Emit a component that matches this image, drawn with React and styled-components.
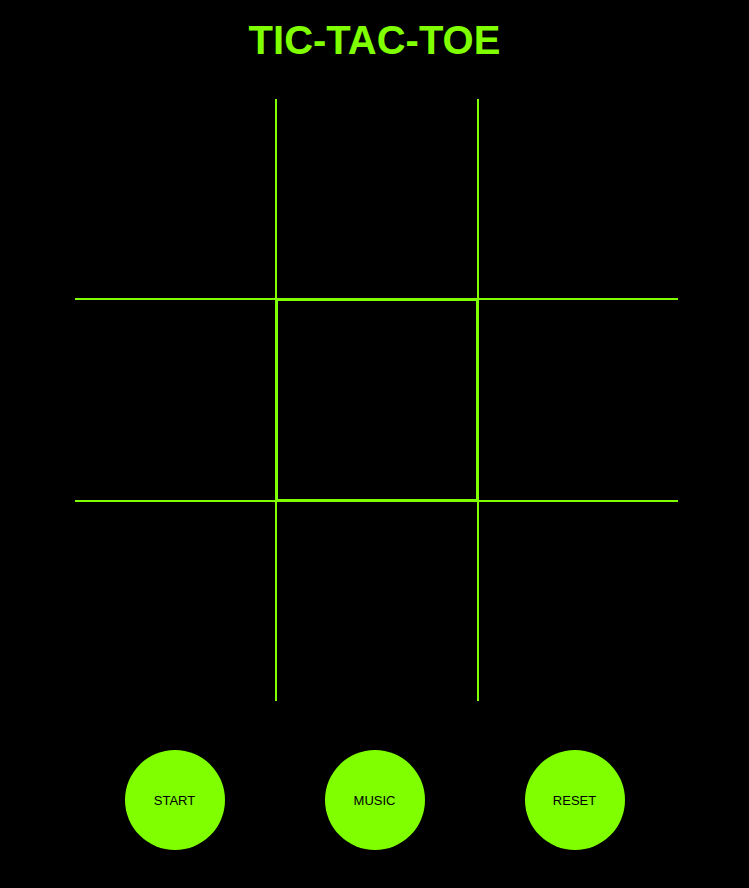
import React from "react";
import styled, { createGlobalStyle, css } from "styled-components";

const GREEN = "#7fff00";

const Global = createGlobalStyle`
  html, body {
    margin: 0;
    padding: 0;
    background: #000;
  }
  body {
    font-family: "Liberation Sans", Arial, sans-serif;
  }
`;

const Page = styled.div`
  display: flex;
  flex-direction: column;
  align-items: center;
  min-height: 888px;
  background: #000;
  padding-top: 17px;
  box-sizing: border-box;
`;

const Title = styled.h1`
  margin: 0;
  font-family: "Liberation Sans", Arial, sans-serif;
  font-weight: 700;
  font-size: 40px;
  line-height: 46px;
  color: ${GREEN};
`;

const Board = styled.div`
  margin-top: 36px;
  margin-left: 4px;
  display: grid;
  grid-template-columns: 201px 202px 200px;
  grid-template-rows: 200px 202px 200px;
`;

const Cell = styled.div`
  box-sizing: border-box;
  border: 0 solid ${GREEN};
  ${({ $col }) => $col === 0 && css`border-right-width: 1px;`}
  ${({ $col }) => $col === 1 && css`border-left-width: 1px; border-right-width: 1px;`}
  ${({ $col }) => $col === 2 && css`border-left-width: 1px;`}
  ${({ $row }) => $row === 0 && css`border-bottom-width: 1px;`}
  ${({ $row }) => $row === 1 && css`border-top-width: 1px; border-bottom-width: 1px;`}
  ${({ $row }) => $row === 2 && css`border-top-width: 1px;`}
  ${({ $active }) => $active && css`box-shadow: inset 0 0 0 1px ${GREEN};`}
`;

const Controls = styled.div`
  margin-top: 49px;
  display: flex;
  gap: 100px;
`;

const RoundButton = styled.button`
  width: 100px;
  height: 100px;
  border-radius: 50%;
  border: none;
  background: ${GREEN};
  color: #000;
  font-family: "Liberation Sans", Arial, sans-serif;
  font-size: 13px;
  padding: 0;
  cursor: pointer;
`;

export default function App() {
  const cells = [];
  for (let r = 0; r < 3; r++) {
    for (let c = 0; c < 3; c++) {
      cells.push(<Cell key={`${r}-${c}`} $row={r} $col={c} $active={r === 1 && c === 1} />);
    }
  }
  return (
    <>
      <Global />
      <Page>
        <Title>TIC-TAC-TOE</Title>
        <Board>{cells}</Board>
        <Controls>
          <RoundButton>START</RoundButton>
          <RoundButton>MUSIC</RoundButton>
          <RoundButton>RESET</RoundButton>
        </Controls>
      </Page>
    </>
  );
}
